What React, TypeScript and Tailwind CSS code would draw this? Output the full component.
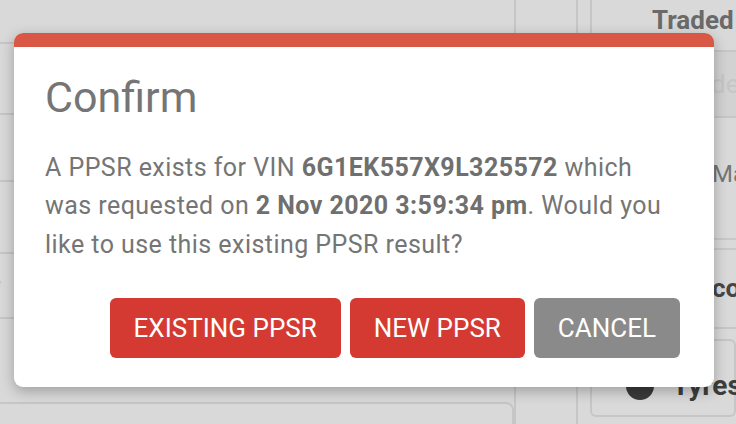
import React from 'react';

// Dimmed page behind the dialog
function Backdrop() {
  return (
    <div className="flex h-[424px] w-[736px] overflow-hidden bg-[#d9d9d9] text-[#757575]">
      {/* left form column */}
      <div className="flex w-[516px] shrink-0 flex-col border-r-2 border-[#c6c6c6]">
        <div className="h-[44px] border-b-2 border-[#c6c6c6]" />
        <div className="h-[71px] border-b-2 border-[#c6c6c6]" />
        <div className="h-[67px] border-b-2 border-[#c6c6c6]" />
        <div className="h-[72px] border-b-2 border-[#c6c6c6]" />
        <div className="flex h-[65px] items-center border-b-2 border-[#c6c6c6] text-[24px] text-[#c2c2c2]">
          <span className="-ml-[10px]">y</span>
        </div>
        <div className="h-[83px]" />
        <div className="flex-1 rounded-tr-[8px] border-t-2 border-r-2 border-[#c6c6c6]" />
      </div>
      {/* narrow middle column */}
      <div className="w-[62px] shrink-0 border-r-2 border-[#c6c6c6]" />
      {/* right column */}
      <div className="flex min-w-0 flex-1 flex-col pl-[12px]">
        <div className="flex h-[50px] border-l-2 border-[#c6c6c6] pl-[60px]">
          <span className="mt-[1px] whitespace-nowrap text-[26px] font-bold text-[#6a6a6a]">Traded</span>
        </div>
        <div className="flex h-[68px] items-center border-y-2 border-[#c6c6c6] bg-[#d2d2d2] pl-[84px]">
          <span className="whitespace-nowrap text-[26px] text-[#c6c6c6]">Trade</span>
        </div>
        <div className="flex h-[120px] items-start pl-[122px] pt-[44px]">
          <span className="whitespace-nowrap text-[24px] leading-none text-[#757575]">Make</span>
        </div>
        <div className="h-[12px] border-y-2 border-[#c8c8c8]" />
        <div className="flex h-[79px] items-center border-b-2 border-[#c6c6c6] pl-[122px]">
          <span className="whitespace-nowrap text-[26px] font-bold text-[#474747]">co</span>
        </div>
        <div className="mt-[10px] flex h-[78px] items-center gap-[18px] rounded-[6px] border-2 border-[#c6c6c6] pl-[34px] pt-[16px]">
          <span className="h-[28px] w-[28px] shrink-0 rounded-full bg-[#3a3a3a]" />
          <span className="whitespace-nowrap text-[28px] font-bold text-[#3d3d3d]">Tyres</span>
        </div>
      </div>
    </div>
  );
}

export default function App() {
  return (
    <div className="relative h-[424px] w-[736px] overflow-hidden font-['Roboto',sans-serif]">
      <Backdrop />

      {/* Confirm dialog */}
      <div className="absolute left-[14px] top-[33px] flex w-[700px] flex-col overflow-hidden rounded-[9px] bg-white shadow-[0_4px_14px_rgba(0,0,0,0.28)]">
        <div className="h-[14px] bg-[#d85845]" />
        <div className="flex flex-col px-[31px] pb-[29px] pt-[25px]">
          <h2 className="text-[43px] font-normal leading-[1.2] text-[#757575]">Confirm</h2>
          <p className="mt-[25px] w-[625px] text-[25px] leading-[38.5px] tracking-[0.45px] text-[#757575]">
            A PPSR exists for VIN <b className="font-bold text-[#6f6f6f]">6G1EK557X9L325572</b> which was requested on{' '}
            <b className="font-bold text-[#6f6f6f]">2 Nov 2020 3:59:34 pm</b>. Would you like to use this existing PPSR
            result?
          </p>
          <div className="mt-[34px] flex justify-end gap-[9px] pr-[3px]">
            <button className="h-[60px] rounded-[6px] bg-[#d43a31] px-[24px] text-[26px] uppercase text-white">
              Existing PPSR
            </button>
            <button className="h-[60px] rounded-[6px] bg-[#d43a31] px-[24px] text-[26px] uppercase text-white">
              New PPSR
            </button>
            <button className="h-[60px] rounded-[6px] bg-[#8a8a8a] px-[24px] text-[26px] uppercase text-white">
              Cancel
            </button>
          </div>
        </div>
      </div>
    </div>
  );
}
